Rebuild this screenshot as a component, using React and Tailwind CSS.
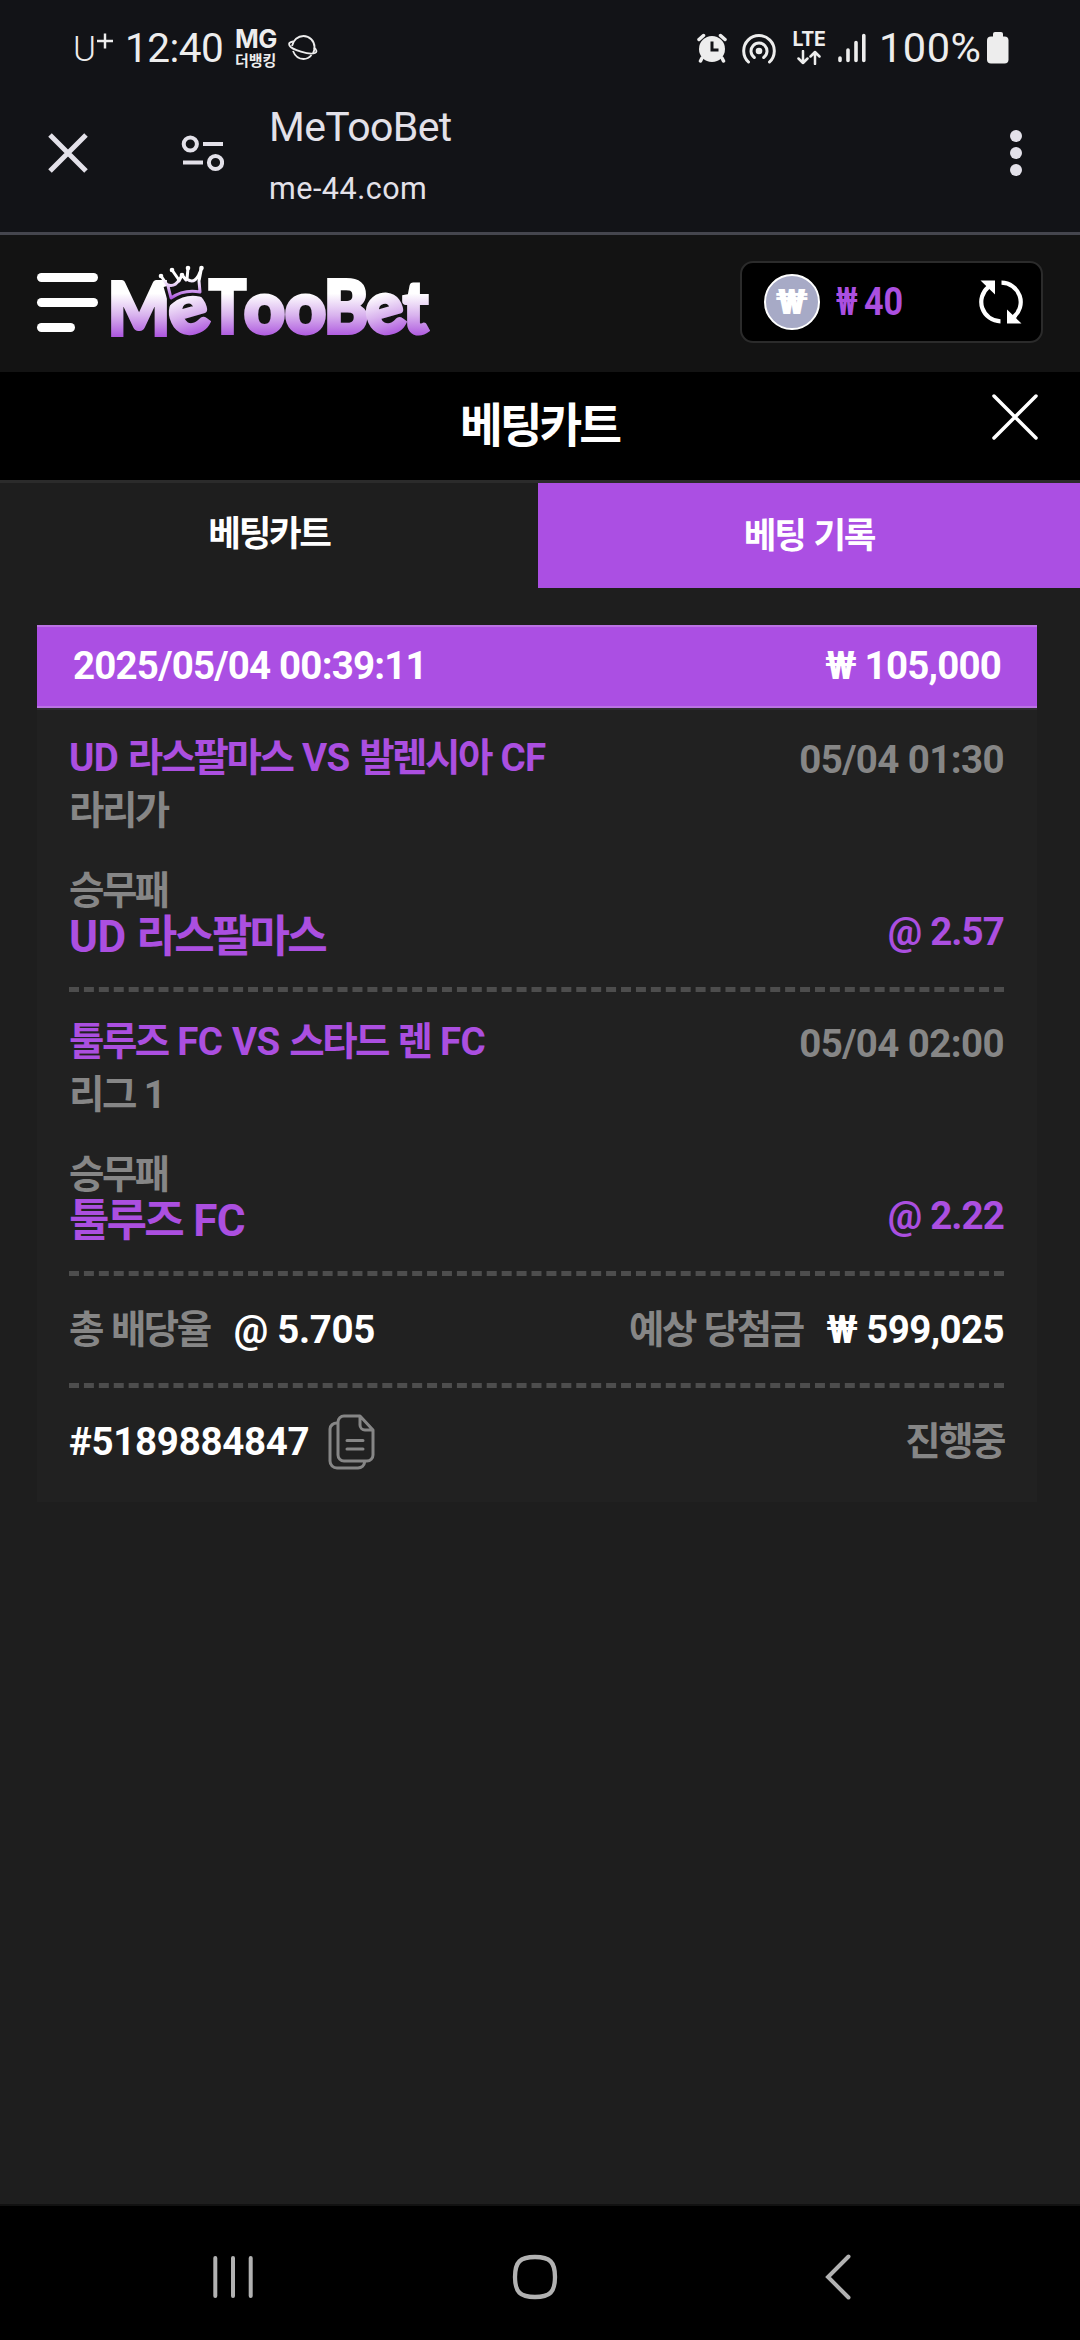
import { Fragment } from 'react';

const BETS = [
  {
    id: 'laliga',
    match: 'UD 라스팔마스 VS 발렌시아 CF',
    league: '라리가',
    time: '05/04 01:30',
    market: '승무패',
    pick: 'UD 라스팔마스',
    odds: '2.57',
  },
  {
    id: 'ligue1',
    match: '툴루즈 FC VS 스타드 렌 FC',
    league: '리그 1',
    time: '05/04 02:00',
    market: '승무패',
    pick: '툴루즈 FC',
    odds: '2.22',
  },
];

/** Hangul is set tighter than the latin letters and digits around it. */
function Mixed({ children }) {
  return children.split(/([가-힣]+)/).map((part, idx) =>
    /[가-힣]/.test(part) ? (
      <span key={idx} className="tracking-[-0.065em]">
        {part}
      </span>
    ) : (
      <Fragment key={idx}>{part}</Fragment>
    )
  );
}

function StatusBar() {
  return (
    <div className="flex h-24 items-center pl-[73px] text-[#ededed]">
      <div className="flex h-[30px] w-[52px] items-start">
        <span className="mt-[4px] w-[24px] text-[35px] leading-[26px] font-light">U</span>
        <svg className="h-[16px] w-[16px]" viewBox="0 0 17 16" stroke="currentColor" strokeWidth="2.600">
          <path d="M8.500 0v16M0 8h17" />
        </svg>
      </div>
      <span className="w-[110px] text-[40.5px] leading-none tracking-[-0.5px] whitespace-nowrap">12:40</span>
      <div className="flex w-[53px] flex-col gap-[2px]">
        <span className="font-['Inter'] text-[25.5px] leading-[22px] font-bold tracking-[-0.6px]">MG</span>
        <span className="pt-[2px] text-[15px] leading-[15px] font-bold whitespace-nowrap">더뱅킹</span>
      </div>
      <svg className="h-[28px] w-[30px]" viewBox="0 0 30 28" fill="none" stroke="currentColor" strokeWidth="1.800">
        <path d="M4 12C5 6 10 2 15.500 2c6 0 11 5 11 11 0 2.500-.5 4.500-1.500 6.500" />
        <path d="M5 17c2 5 6 8 10.500 8 3.500 0 6-1.500 8-4" />
        <path d="M5 7.500C1.500 8 .5 9.500 1.500 11.500c2 4 20 10 25.500 7.500 2.500-1 1.500-3.500-1.200-5.500" />
      </svg>

      <div className="ml-auto flex items-center">
        <svg className="h-[30px] w-[30px]" viewBox="0 0 30 30">
          <circle cx="15" cy="16" r="13" fill="currentColor" />
          <path
            d="M2 6.500l4.500-4M28 6.500l-4.500-4M5 25l-1.500 3M25 25l1.500 3"
            stroke="currentColor"
            strokeWidth="3.500"
            strokeLinecap="round"
          />
          <path d="M15 8.500v8.500h6.500" fill="none" stroke="#121317" strokeWidth="3" />
        </svg>
        <svg
          className="ml-[14px] h-[32px] w-[36px]"
          viewBox="0 0 36 32"
          fill="none"
          stroke="currentColor"
          strokeWidth="3"
          strokeLinecap="round"
        >
          <circle cx="18" cy="19" r="3.300" fill="currentColor" stroke="none" />
          <path d="M13.300 25.500a8 8 0 1 1 9.400 0" />
          <path d="M7.500 30a15.300 15.300 0 1 1 21 0" />
        </svg>
        <div className="ml-[15px] flex w-[34px] flex-col items-center gap-[3px]">
          <span className="font-['Inter'] text-[19.5px] leading-[16px] font-bold tracking-[-0.3px]">LTE</span>
          <svg
            className="h-[15px] w-[24px]"
            viewBox="0 0 24 15"
            fill="none"
            stroke="currentColor"
            strokeWidth="2.500"
            strokeLinecap="round"
            strokeLinejoin="round"
          >
            <path d="M6 1v12M1.500 8.500L6 13l4.500-4.500M18 14V2M13.500 6.500L18 2l4.500 4.500" />
          </svg>
        </div>
        <svg
          className="ml-[12px] h-[30px] w-[28px]"
          viewBox="0 0 28 30"
          stroke="currentColor"
          strokeWidth="3.600"
          strokeLinecap="round"
        >
          <path d="M2 25v2.500M10 17v10.500M18 9.500v18M25.800 2.500v25" />
        </svg>
        <span className="ml-[13px] w-[108px] text-[41.5px] leading-none tracking-[0.5px] whitespace-nowrap">100%</span>
        <svg className="h-[32px] w-[22px]" viewBox="0 0 22 32" fill="currentColor">
          <rect x="6" y="0" width="10" height="8" rx="2" />
          <rect x="0" y="4.500" width="21.500" height="27" rx="4" />
        </svg>
      </div>
      <div className="w-[71px]" />
    </div>
  );
}

function BrowserToolbar() {
  return (
    <div className="flex h-[139px] items-start border-b-[3px] border-[#45464e] pt-2 pr-[58px] pl-[48px] text-[#e3e1e9]">
      <svg className="mt-[29px] h-10 w-10" viewBox="0 0 40 40" stroke="currentColor" strokeWidth="5">
        <path d="M2 2l36 36M38 2L2 38" />
      </svg>
      <svg
        className="mt-[31px] ml-[93px] h-[37px] w-[43px]"
        viewBox="0 0 43 37"
        fill="none"
        stroke="currentColor"
        strokeWidth="4"
      >
        <circle cx="9.300" cy="9" r="6.600" />
        <circle cx="34.500" cy="27.500" r="6.600" />
        <path d="M22 9h20M2 27.500h20" />
      </svg>
      <div className="ml-[45px] flex flex-col">
        <span className="-mt-[2px] text-[41px] leading-[50px] tracking-[-0.6px]">MeTooBet</span>
        <span className="mt-[19px] text-[30.5px] leading-[36px] tracking-[0.5px]">me-44.com</span>
      </div>
      <svg className="mt-[26px] ml-auto h-[46px] w-[12px]" viewBox="0 0 12 46" fill="currentColor">
        <circle cx="6" cy="6" r="6" />
        <circle cx="6" cy="23" r="6" />
        <circle cx="6" cy="40" r="6" />
      </svg>
    </div>
  );
}

function Logo() {
  return (
    <svg className="ml-[9px] h-[80px] w-[326px] overflow-visible" viewBox="0 0 326 80">
      <defs>
        <linearGradient id="logoFill" gradientUnits="userSpaceOnUse" x1="0" y1="14" x2="0" y2="76">
          <stop offset="0.25" stopColor="#ffffff" />
          <stop offset="0.6" stopColor="#d9b3ee" />
          <stop offset="1" stopColor="#a648dc" />
        </linearGradient>
        <linearGradient id="crownFill" gradientUnits="userSpaceOnUse" x1="0" y1="4" x2="0" y2="36">
          <stop offset="0.35" stopColor="#ffffff" />
          <stop offset="1" stopColor="#a648dc" />
        </linearGradient>
      </defs>
      <g
        fill="url(#logoFill)"
        stroke="url(#logoFill)"
        strokeWidth="4"
        className="font-['Lato'] text-[73px] font-black"
      >
        <text x="1" y="71" textLength="62" lengthAdjust="spacingAndGlyphs">M</text>
        <text x="62" y="69" textLength="39" lengthAdjust="spacingAndGlyphs" transform="rotate(-16 81 50)">e</text>
        <text x="102" y="69" textLength="37" lengthAdjust="spacingAndGlyphs">T</text>
        <text x="137" y="69" textLength="82" lengthAdjust="spacingAndGlyphs">oo</text>
        <text x="217" y="69" textLength="44" lengthAdjust="spacingAndGlyphs">B</text>
        <text x="259" y="69" textLength="38" lengthAdjust="spacingAndGlyphs" transform="rotate(-16 278 50)">e</text>
        <text x="296" y="69" textLength="25" lengthAdjust="spacingAndGlyphs">t</text>
      </g>
      {/* dark rim keeps the crown apart from the letters under it */}
      <path d="M60 22L64 36Q77 26 93 29L92 17" fill="#131313" stroke="#131313" strokeWidth="7" />
      <g fill="none" stroke="url(#crownFill)" strokeWidth="3" strokeLinejoin="round" strokeLinecap="round">
        <path d="M54 12L61 22L64 34Q77 25 93 28L92 17L94.500 4" />
        <path d="M61 21Q68 23 72 16L65 6M72 17L75 11L79 16M81 4L80 15Q89 22 94.500 4" />
      </g>
      <g fill="#ffffff">
        <circle cx="54" cy="12" r="2.300" />
        <circle cx="65" cy="6" r="2.300" />
        <circle cx="75" cy="11" r="2.300" />
        <circle cx="81" cy="4" r="2.300" />
        <circle cx="94.500" cy="4" r="2.300" />
      </g>
    </svg>
  );
}

function SiteHeader() {
  return (
    <div className="flex h-[137px] items-center bg-[#131313] pr-[37px] pl-[37px]">
      <div className="-mt-[3px] flex w-[61px] flex-col gap-4">
        <span className="h-[9px] rounded-full bg-white" />
        <span className="h-[9px] rounded-full bg-white" />
        <span className="h-[9px] w-[38px] rounded-full bg-white" />
      </div>
      <Logo />
      <div className="mt-[-3px] ml-auto flex h-[82px] w-[303px] items-center rounded-[13px] border-2 border-[#2b2b2b] bg-black pr-[18px] pl-[22px]">
        <div className="flex h-14 w-14 items-center justify-center rounded-full border-2 border-white bg-[#a7aac6] text-[35px] leading-none font-black text-white">
          <span className="scale-x-110">₩</span>
        </div>
        <div className="ml-[16px] flex items-center text-[38px] leading-none font-bold text-[#ab4fe0]">
          <span className="w-[28px] origin-left scale-x-[0.7]">₩</span>
          <span className="origin-left scale-x-[0.9]">40</span>
        </div>
        <svg className="ml-auto h-11 w-11" viewBox="0 0 44 44" fill="none" stroke="#ffffff" strokeWidth="4.200">
          <path d="M22.500 2.700a19.400 19.400 0 0 1 12 34.500" />
          <path d="M21.500 41.300a19.400 19.400 0 0 1-12-34.500" />
          <path d="M1.500.5H16V14.500zM28 29.500V43.500H42.500z" fill="#ffffff" stroke="none" />
        </svg>
      </div>
    </div>
  );
}

function CartTitle() {
  return (
    <div className="flex h-[111px] items-start border-b-[3px] border-[#2b2b2b] bg-black pr-[42px]">
      <h1 className="mt-[24px] flex-1 pl-[87px] text-center text-[46.5px] leading-[60px] font-bold">
        <Mixed>베팅카트</Mixed>
      </h1>
      <svg
        className="mt-[22px] h-[46px] w-[46px]"
        viewBox="0 0 46 46"
        stroke="#ffffff"
        strokeWidth="3.500"
        strokeLinecap="round"
      >
        <path d="M2 2l42 42M44 2L2 44" />
      </svg>
    </div>
  );
}

function Tabs() {
  return (
    <div className="flex h-[105px] text-[35.5px] font-bold">
      <button type="button" className="w-[538px] pb-[2px]">
        <Mixed>베팅카트</Mixed>
      </button>
      <button type="button" className="flex-1 bg-[#ab4fe3] pt-[2px]">
        <Mixed>베팅 기록</Mixed>
      </button>
    </div>
  );
}

function Bet({ match, league, time, market, pick, odds }) {
  return (
    <div className="flex h-[284px] flex-col border-b-[5px] border-dashed border-[#4d4d4d] pt-6 text-[#868686]">
      <div className="flex h-[53px] items-center justify-between">
        <span className="tracking-[-0.6px] text-[#ab4fe0] [word-spacing:0.6px]">
          <Mixed>{match}</Mixed>
        </span>
        <span className="mt-1">{time}</span>
      </div>
      <div className="flex h-[53px] items-center">
        <span>
          <Mixed>{league}</Mixed>
        </span>
      </div>
      <div className="mt-[30px] flex h-[46px] items-center">
        <Mixed>{market}</Mixed>
      </div>
      <div className="flex h-[46px] items-center justify-between text-[#ab4fe0]">
        <span className="text-[44px] [word-spacing:1px]">
          <Mixed>{pick}</Mixed>
        </span>
        <span className="mb-[10px] tracking-[-0.9px]">@ {odds}</span>
      </div>
    </div>
  );
}

function CopyIcon() {
  return (
    <svg
      className="ml-[19px] h-[56px] w-[47px]"
      viewBox="0 0 47 56"
      fill="none"
      stroke="#868686"
      strokeWidth="3"
      strokeLinecap="round"
      strokeLinejoin="round"
    >
      <path d="M32 2H16a6 6 0 0 0-6 6v33a6 6 0 0 0 6 6h23a6 6 0 0 0 6-6V16zM32 2v9a5 5 0 0 0 5 5h8" />
      <path d="M9 9a7 6 0 0 0-7 6v32a7 7 0 0 0 7 7h21a7 6 0 0 0 6.500-5.500M19 26.500h16M19 35h16" />
    </svg>
  );
}

function BetSlip() {
  return (
    <div className="mx-[37px] mt-[37px] w-[1000px] bg-[#212121] text-[38.5px] leading-none font-bold tracking-[-0.6px] whitespace-nowrap">
      <div className="flex h-[83px] items-center justify-between border-y-2 border-[#bb72e4] bg-[#ab4fe3] px-[36px] tracking-[-0.8px]">
        <span>2025/05/04 00:39:11</span>
        <span>₩ 105,000</span>
      </div>
      <div className="h-[794px] pr-[33px] pl-[32px] shadow-[inset_0_2px_0_#2d2930]">
        {BETS.map((bet) => (
          <Bet key={bet.id} {...bet} />
        ))}
        <div className="flex h-[112px] items-center justify-between border-b-[5px] border-dashed border-[#4d4d4d] pt-[2px]">
          <div className="flex items-center gap-6">
            <span className="text-[#868686]">
              <Mixed>총 배당율</Mixed>
            </span>
            <span className="tracking-[-0.3px]">@ 5.705</span>
          </div>
          <div className="flex items-center gap-6">
            <span className="text-[#868686]">
              <Mixed>예상 당첨금</Mixed>
            </span>
            <span>₩ 599,025</span>
          </div>
        </div>
        <div className="flex h-[108px] items-center justify-between">
          <div className="flex items-center">
            <span className="tracking-[-0.3px]">#5189884847</span>
            <CopyIcon />
          </div>
          <span className="text-[#868686]">
            <Mixed>진행중</Mixed>
          </span>
        </div>
      </div>
    </div>
  );
}

function NavigationBar() {
  return (
    <div className="flex h-[136px] items-center border-t-2 border-[#111111] bg-black pt-[7px] pl-[213px] text-[#b2b2b2]">
      <svg className="h-11 w-10" viewBox="0 0 40 44" stroke="currentColor" strokeWidth="4" strokeLinecap="round">
        <path d="M2.300 3v38M20 3v38M37.700 3v38" />
      </svg>
      <svg className="ml-[259px] h-[46px] w-[46px]" viewBox="0 0 46 46" fill="none" stroke="currentColor" strokeWidth="4.300">
        <path d="M23 3C8 3 3 8 3 23s5 20 20 20 20-5 20-20S38 3 23 3z" />
      </svg>
      <svg
        className="ml-[267px] h-[46px] w-[27px]"
        viewBox="0 0 27 46"
        fill="none"
        stroke="currentColor"
        strokeWidth="4"
        strokeLinecap="round"
      >
        <path d="M23.500 2.500L3 23l20.500 20.500" />
      </svg>
    </div>
  );
}

export default function App() {
  return (
    <div className="flex h-[2340px] w-[1080px] flex-col overflow-hidden bg-[#1e1e1e] font-['Roboto','Noto_Sans_CJK_KR',sans-serif] text-white">
      <div className="bg-[#121317]">
        <StatusBar />
        <BrowserToolbar />
      </div>
      <SiteHeader />
      <CartTitle />
      <Tabs />
      <BetSlip />
      <div className="flex-1" />
      <NavigationBar />
    </div>
  );
}
